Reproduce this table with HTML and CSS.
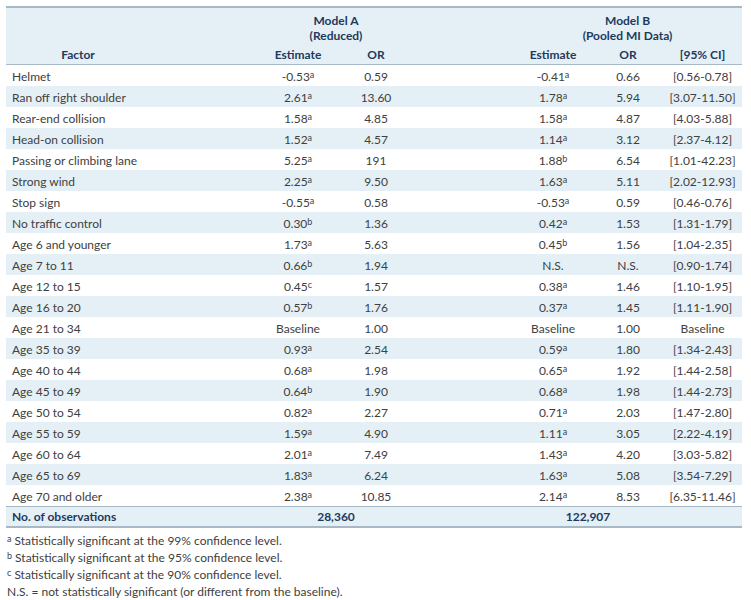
FILE: index.html
```html
<!DOCTYPE html>
<html>
<head>
<meta charset="utf-8">
<link rel="stylesheet" href="styles.css">
</head>
<body>
<div class="page">
<table class="tbl">
  <colgroup>
    <col class="c-factor"><col class="c-gap1"><col class="c-esta"><col class="c-ora"><col class="c-gap2"><col class="c-estb"><col class="c-orb"><col class="c-ci">
  </colgroup>
  <thead>
    <tr class="h1">
      <th></th><th></th>
      <th colspan="2" class="grp">Model A<br>(Reduced)</th>
      <th></th>
      <th colspan="3" class="grp">Model B<br>(Pooled MI Data)</th>
    </tr>
    <tr class="h2">
      <th>Factor</th><th></th><th>Estimate</th><th>OR</th><th></th><th>Estimate</th><th>OR</th><th>[95% CI]</th>
    </tr>
  </thead>
  <tbody>
    <tr><td class="f">Helmet</td><td></td><td>-0.53<sup>a</sup></td><td>0.59</td><td></td><td>-0.41<sup>a</sup></td><td>0.66</td><td>[0.56-0.78]</td></tr>
    <tr><td class="f">Ran off right shoulder</td><td></td><td>2.61<sup>a</sup></td><td>13.60</td><td></td><td>1.78<sup>a</sup></td><td>5.94</td><td>[3.07-11.50]</td></tr>
    <tr><td class="f">Rear-end collision</td><td></td><td>1.58<sup>a</sup></td><td>4.85</td><td></td><td>1.58<sup>a</sup></td><td>4.87</td><td>[4.03-5.88]</td></tr>
    <tr><td class="f">Head-on collision</td><td></td><td>1.52<sup>a</sup></td><td>4.57</td><td></td><td>1.14<sup>a</sup></td><td>3.12</td><td>[2.37-4.12]</td></tr>
    <tr><td class="f">Passing or climbing lane</td><td></td><td>5.25<sup>a</sup></td><td>191</td><td></td><td>1.88<sup>b</sup></td><td>6.54</td><td>[1.01-42.23]</td></tr>
    <tr><td class="f">Strong wind</td><td></td><td>2.25<sup>a</sup></td><td>9.50</td><td></td><td>1.63<sup>a</sup></td><td>5.11</td><td>[2.02-12.93]</td></tr>
    <tr><td class="f">Stop sign</td><td></td><td>-0.55<sup>a</sup></td><td>0.58</td><td></td><td>-0.53<sup>a</sup></td><td>0.59</td><td>[0.46-0.76]</td></tr>
    <tr><td class="f">No traffic control</td><td></td><td>0.30<sup>b</sup></td><td>1.36</td><td></td><td>0.42<sup>a</sup></td><td>1.53</td><td>[1.31-1.79]</td></tr>
    <tr><td class="f">Age 6 and younger</td><td></td><td>1.73<sup>a</sup></td><td>5.63</td><td></td><td>0.45<sup>b</sup></td><td>1.56</td><td>[1.04-2.35]</td></tr>
    <tr><td class="f">Age 7 to 11</td><td></td><td>0.66<sup>b</sup></td><td>1.94</td><td></td><td>N.S.</td><td>N.S.</td><td>[0.90-1.74]</td></tr>
    <tr><td class="f">Age 12 to 15</td><td></td><td>0.45<sup>c</sup></td><td>1.57</td><td></td><td>0.38<sup>a</sup></td><td>1.46</td><td>[1.10-1.95]</td></tr>
    <tr><td class="f">Age 16 to 20</td><td></td><td>0.57<sup>b</sup></td><td>1.76</td><td></td><td>0.37<sup>a</sup></td><td>1.45</td><td>[1.11-1.90]</td></tr>
    <tr><td class="f">Age 21 to 34</td><td></td><td>Baseline</td><td>1.00</td><td></td><td>Baseline</td><td>1.00</td><td>Baseline</td></tr>
    <tr><td class="f">Age 35 to 39</td><td></td><td>0.93<sup>a</sup></td><td>2.54</td><td></td><td>0.59<sup>a</sup></td><td>1.80</td><td>[1.34-2.43]</td></tr>
    <tr><td class="f">Age 40 to 44</td><td></td><td>0.68<sup>a</sup></td><td>1.98</td><td></td><td>0.65<sup>a</sup></td><td>1.92</td><td>[1.44-2.58]</td></tr>
    <tr><td class="f">Age 45 to 49</td><td></td><td>0.64<sup>b</sup></td><td>1.90</td><td></td><td>0.68<sup>a</sup></td><td>1.98</td><td>[1.44-2.73]</td></tr>
    <tr><td class="f">Age 50 to 54</td><td></td><td>0.82<sup>a</sup></td><td>2.27</td><td></td><td>0.71<sup>a</sup></td><td>2.03</td><td>[1.47-2.80]</td></tr>
    <tr><td class="f">Age 55 to 59</td><td></td><td>1.59<sup>a</sup></td><td>4.90</td><td></td><td>1.11<sup>a</sup></td><td>3.05</td><td>[2.22-4.19]</td></tr>
    <tr><td class="f">Age 60 to 64</td><td></td><td>2.01<sup>a</sup></td><td>7.49</td><td></td><td>1.43<sup>a</sup></td><td>4.20</td><td>[3.03-5.82]</td></tr>
    <tr><td class="f">Age 65 to 69</td><td></td><td>1.83<sup>a</sup></td><td>6.24</td><td></td><td>1.63<sup>a</sup></td><td>5.08</td><td>[3.54-7.29]</td></tr>
    <tr><td class="f">Age 70 and older</td><td></td><td>2.38<sup>a</sup></td><td>10.85</td><td></td><td>2.14<sup>a</sup></td><td>8.53</td><td>[6.35-11.46]</td></tr>
  </tbody>
  <tfoot>
    <tr><td class="f">No. of observations</td><td></td><td colspan="2">28,360</td><td></td><td colspan="2">122,907</td><td></td></tr>
  </tfoot>
</table>
<div class="notes">
  <p><sup>a</sup> Statistically significant at the 99% confidence level.</p>
  <p><sup>b</sup> Statistically significant at the 95% confidence level.</p>
  <p><sup>c</sup> Statistically significant at the 90% confidence level.</p>
  <p>N.S. = not statistically significant (or different from the baseline).</p>
</div>
</div>
</body>
</html>
```
FILE: styles.css
```css
html, body {
  margin: 0;
  padding: 0;
  background: #ffffff;
}
.page {
  padding: 6px 9px 0 6px;
  font-family: "Lato", "Open Sans", sans-serif;
  font-size: 12px;
  color: #404040;
}
.tbl {
  width: 736px;
  border-collapse: collapse;
  table-layout: fixed;
}
.c-factor { width: 144px; }
.c-gap1 { width: 108px; }
.c-esta { width: 80px; }
.c-ora { width: 76px; }
.c-gap2 { width: 99px; }
.c-estb { width: 80px; }
.c-orb { width: 70px; }
.c-ci { width: 79px; }

thead {
  background: #e4f0f6;
}
thead tr.h1 th {
  border-top: 2px solid #a7b8c6;
  height: 30px;
  padding: 5px 0 0;
  vertical-align: top;
  line-height: 15px;
}
thead tr.h2 th {
  height: 19px;
  padding: 0 0 2px;
  border-bottom: 1px solid #a7b8c6;
  vertical-align: bottom;
  line-height: 15px;
}
th {
  font-weight: bold;
  color: #1e3a5c;
  text-align: center;
}
td {
  text-align: center;
  height: 21px;
  padding: 0;
  white-space: nowrap;
}
tbody td {
  height: 19px;
  padding-top: 2px;
}
td.f {
  text-align: left;
  padding-left: 6px;
}
tbody tr:nth-child(even) {
  background: #e4f0f6;
}
sup {
  font-size: 9px;
  vertical-align: 3px;
  line-height: 0;
}
tfoot tr {
  background: #e4f0f6;
}
tfoot td {
  height: 19px;
  font-weight: bold;
  color: #1e3a5c;
  border-top: 1px solid #a7b8c6;
  border-bottom: 2px solid #a7b8c6;
}
.notes {
  padding-top: 4px;
  padding-left: 1px;
}
.notes p {
  margin: 0;
  line-height: 17px;
}
```
